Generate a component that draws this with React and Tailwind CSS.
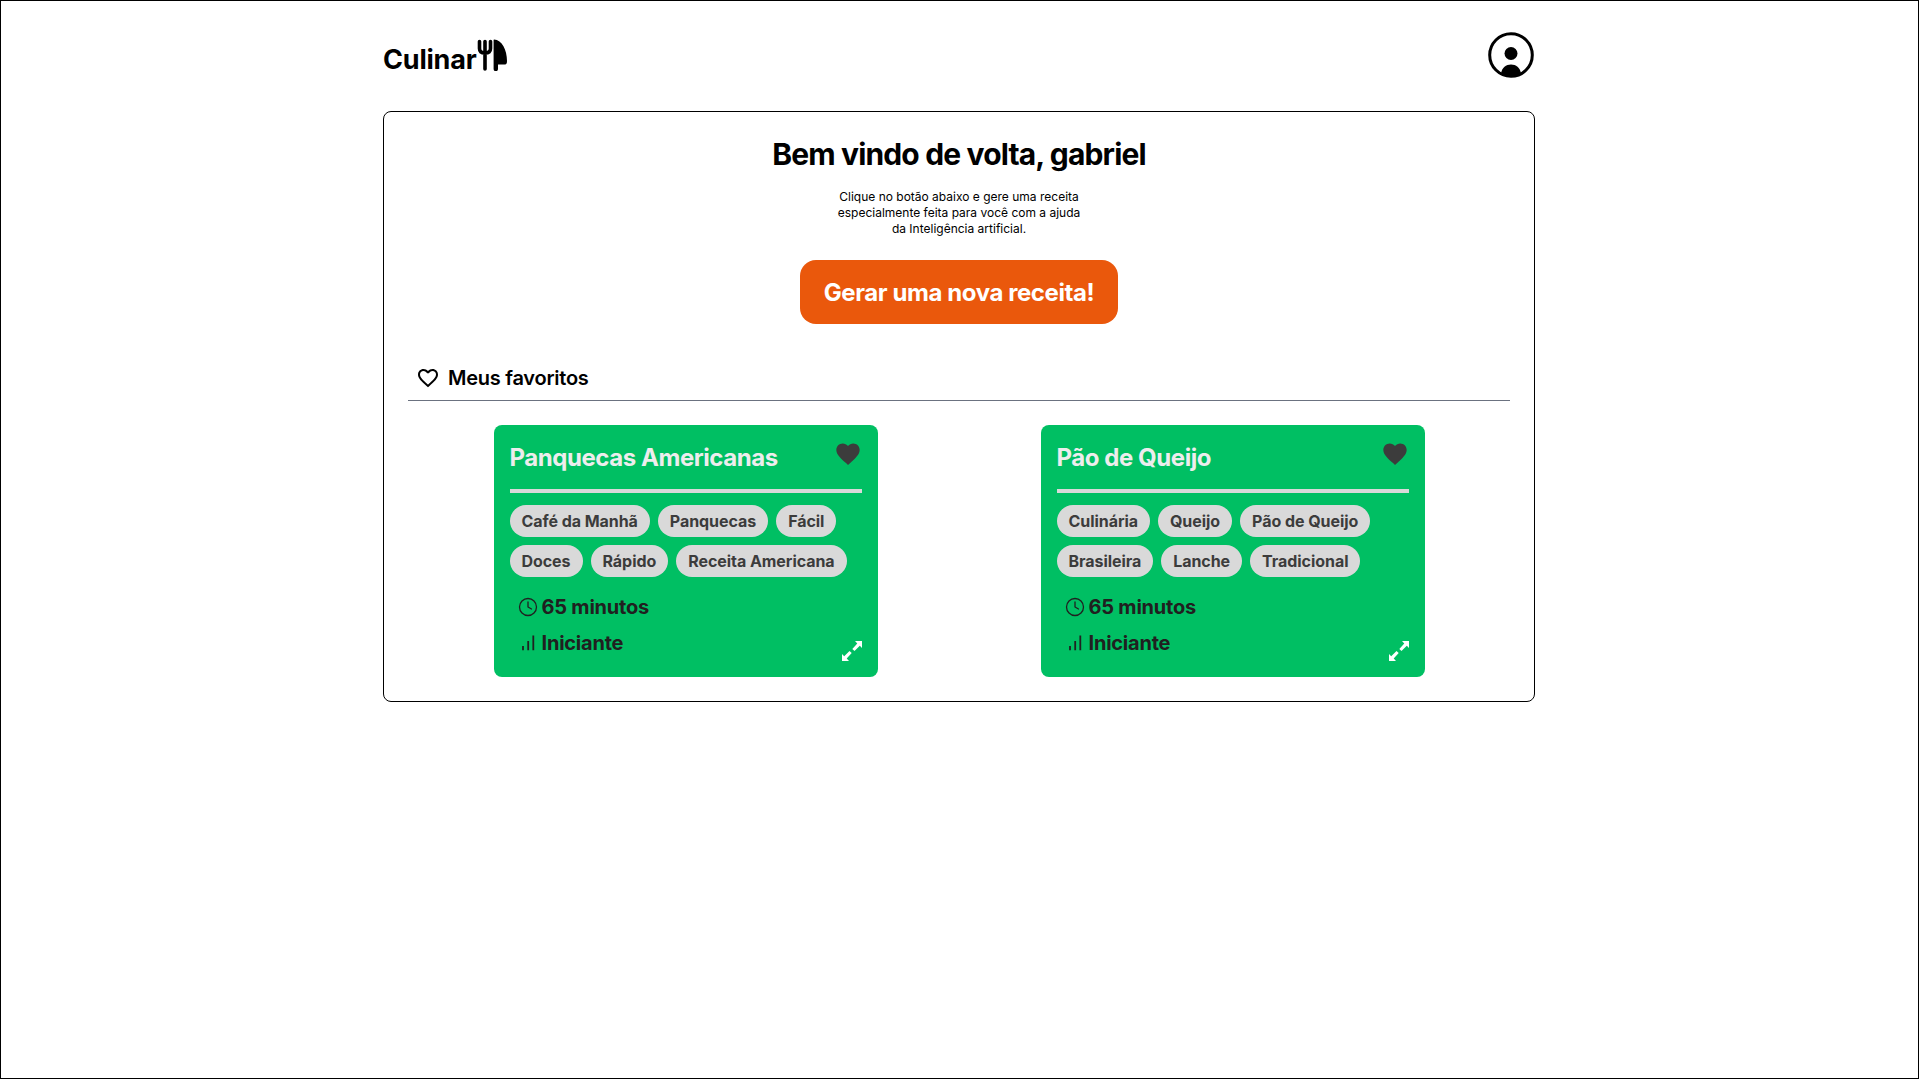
import { MdFavorite, MdFavoriteBorder } from "react-icons/md";

const recipes = [
  {
    title: "Panquecas Americanas",
    tags: ["Café da Manhã", "Panquecas", "Fácil", "Doces", "Rápido", "Receita Americana"],
    time: "65 minutos",
    level: "Iniciante",
  },
  {
    title: "Pão de Queijo",
    tags: ["Culinária", "Queijo", "Pão de Queijo", "Brasileira", "Lanche", "Tradicional"],
    time: "65 minutos",
    level: "Iniciante",
  },
];

function Logo() {
  return (
    <div className="mt-[5px] flex items-start">
      <span className="pt-[5px] text-[27px] leading-8 font-bold tracking-[-0.2px]">Culinar</span>
      <svg className="h-8 w-[31px]" viewBox="0 0 31 32" fill="none" stroke="black" strokeLinecap="round">
        <path d="M2.500 2.500v7c0 3 2 4.500 5.500 4.500s5.500-1.500 5.500-4.500v-7M8 2.500V30" strokeWidth="3.600" />
        <path d="M17 0.500C25 1 30 11 30 22c0 2-.5 3.500-2 3.500h-7V30a2.200 2.200 0 0 1-4.400 0V1z" fill="black" stroke="none" />
      </svg>
    </div>
  );
}

function ProfileIcon() {
  return (
    <svg className="mr-px size-[46px]" viewBox="0 0 46 46">
      <circle cx="23" cy="23" r="21.300" fill="none" stroke="black" strokeWidth="3" />
      <circle cx="23" cy="21.500" r="6.500" />
      <path d="M13 41.500c1-6 5-9 10-9s9 3 10 9c-6 4.500-14 4.500-20 0z" />
    </svg>
  );
}

function ClockIcon() {
  return (
    <svg className="size-5" viewBox="0 0 20 20" fill="none" stroke="currentColor" strokeWidth="1.300" strokeLinecap="round" strokeLinejoin="round">
      <circle cx="10" cy="10" r="8.500" />
      <path d="M10 5v5l3.500 2" />
    </svg>
  );
}

function LevelIcon() {
  return (
    <svg className="size-5" viewBox="0 0 20 20" fill="none" stroke="currentColor" strokeWidth="1.800">
      <path d="M5 13v4.200M10.200 8v9.200M15.300 2.500v14.700" />
    </svg>
  );
}

function ExpandIcon() {
  return (
    <svg className="relative top-1 size-5" viewBox="0 0 20 20" fill="white">
      <path d="M13 0h7v7l-2.200-2.200-5.300 5.300-2.200-2.200 5-5.300zM7 20H0v-7l2.200 2.200 5.300-5.300 2.200 2.200-5 5.300z" />
    </svg>
  );
}

function RecipeCard({ title, tags, time, level }) {
  return (
    <article className="flex h-[252px] w-96 flex-col rounded-lg bg-[#00bf63] p-4 text-[#202020]">
      <div className="box-content flex h-12 justify-between border-b-4 border-[#d9d9d9]">
        <h3 className="pt-px text-2xl font-bold tracking-[-0.44px] text-[#ededed]">{title}</h3>
        <MdFavorite className="-mt-px size-7 text-[#3c3c3c]" />
      </div>
      <div className="mt-3 flex flex-wrap gap-2">
        {tags.map((tag) => (
          <span key={tag} className="h-8 rounded-full bg-[#d9d9d9] px-3 leading-8 font-bold tracking-[-0.055px] text-[#3c3c3c]">
            {tag}
          </span>
        ))}
      </div>
      <div className="mt-4 flex items-end justify-between">
        <div className="flex flex-col gap-2 pl-2 text-xl font-bold tracking-[-0.22px]">
          <div className="flex items-center gap-1">
            <ClockIcon />
            {time}
          </div>
          <div className="flex items-center gap-1">
            <LevelIcon />
            {level}
          </div>
        </div>
        <ExpandIcon />
      </div>
    </article>
  );
}

export default function App() {
  return (
    <div className="min-h-screen border border-black bg-white pr-px font-['Inter',sans-serif] text-black">
      <div className="mx-auto w-[1152px]">
        <header className="mb-0.5 flex h-[108px] items-center justify-between">
          <Logo />
          <ProfileIcon />
        </header>
        <main className="flex h-[591px] flex-col items-center rounded-lg border border-black px-6">
          <h1 className="mt-6 text-3xl font-bold tracking-[-0.84px]">Bem vindo de volta, gabriel</h1>
          <p className="mt-[17px] w-64 text-center text-xs">
            Clique no botão abaixo e gere uma receita especialmente feita para você com a ajuda da Inteligência artificial.
          </p>
          <button className="mt-[23px] h-16 rounded-2xl bg-[#ea580c] px-6 pt-0.5 text-2xl font-bold tracking-[-0.41px] text-white">
            Gerar uma nova receita!
          </button>
          <section className="mt-9 w-full">
            <div className="flex h-[41px] items-center gap-2 border-b border-[#6b7280] pb-[5px] pl-2">
              <MdFavoriteBorder className="size-6" />
              <h2 className="text-xl font-semibold tracking-[-0.25px]">Meus favoritos</h2>
            </div>
            <div className="mt-6 flex justify-around px-1">
              {recipes.map((recipe) => (
                <RecipeCard key={recipe.title} {...recipe} />
              ))}
            </div>
          </section>
        </main>
      </div>
    </div>
  );
}
